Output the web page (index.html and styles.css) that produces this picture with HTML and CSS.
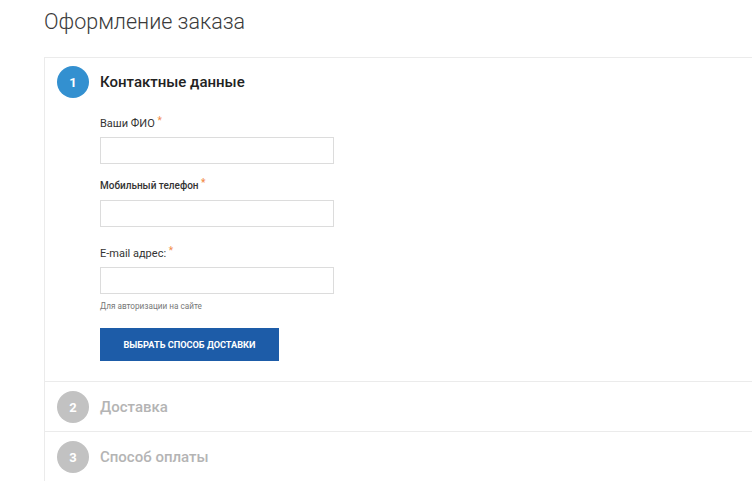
FILE: index.html
```html
<!DOCTYPE html>
<html lang="ru">
<head>
<meta charset="utf-8">
<title>Оформление заказа</title>
<link rel="stylesheet" href="styles.css">
</head>
<body>
<div class="page">
  <h1 class="title">Оформление заказа</h1>
  <div class="steps">
    <section class="step step-active">
      <div class="step-head">
        <span class="num">1</span>
        <h2 class="step-title">Контактные данные</h2>
      </div>
      <div class="step-body">
        <div class="field field-first">
          <label class="label">Ваши ФИО <span class="req">*</span></label>
          <input class="input" type="text">
        </div>
        <div class="field field-second">
          <label class="label label-bold">Мобильный телефон <span class="req">*</span></label>
          <input class="input" type="text">
        </div>
        <div class="field field-third">
          <label class="label">E-mail адрес: <span class="req">*</span></label>
          <input class="input" type="text">
          <div class="hint">Для авторизации на сайте</div>
        </div>
        <button class="btn" type="button">Выбрать способ доставки</button>
      </div>
    </section>
    <section class="step step-disabled">
      <div class="step-head">
        <span class="num">2</span>
        <h2 class="step-title">Доставка</h2>
      </div>
    </section>
    <section class="step step-disabled">
      <div class="step-head">
        <span class="num">3</span>
        <h2 class="step-title">Способ оплаты</h2>
      </div>
    </section>
  </div>
</div>
</body>
</html>
```
FILE: styles.css
```css
html, body {
  margin: 0;
  padding: 0;
  background: #fff;
}
body {
  font-family: Roboto, "Open Sans", "Liberation Sans", sans-serif;
  color: #333;
}
.page {
  padding: 0 0 0 44px;
}
.title {
  margin: 0;
  height: 57px;
  padding-top: 7px;
  box-sizing: border-box;
  font-size: 21.5px;
  line-height: 30px;
  font-weight: 300;
  color: #3a3a3a;
}
.steps {
  border-top: 1px solid #ebebeb;
  border-left: 1px solid #ebebeb;
}
.step + .step {
  border-top: 1px solid #ebebeb;
}
.step-head {
  display: flex;
  align-items: center;
  padding: 8px 12px;
  gap: 11px;
}
.step-disabled .step-head {
  padding: 9px 12px 8px;
}
.num {
  width: 32px;
  height: 32px;
  border-radius: 50%;
  display: flex;
  align-items: center;
  justify-content: center;
  font-size: 13px;
  font-weight: 700;
  color: #fff;
  flex: none;
}
.step-active .num {
  background: #3390d0;
}
.step-disabled .num {
  background: #c2c2c2;
}
.step-title {
  margin: 0;
  font-size: 15px;
  font-weight: 500;
  line-height: 20px;
}
.step-active .step-title {
  color: #222;
}
.step-disabled .step-title {
  color: #b4b4b4;
}
.step-body {
  padding: 10px 0 20px 55px;
}
.field {
  display: flex;
  flex-direction: column;
  align-items: flex-start;
}
.field-second {
  margin-top: 14px;
}
.field-third {
  margin-top: 19px;
}
.label {
  font-size: 11px;
  line-height: 16px;
  color: #333;
  margin-bottom: 5px;
}
.label-bold {
  font-size: 10px;
  font-weight: 500;
  margin-bottom: 6px;
}
.req {
  color: #f28a4a;
  font-size: 10px;
  vertical-align: top;
  position: relative;
  top: -3px;
}
.input {
  width: 234px;
  height: 27px;
  box-sizing: border-box;
  border: 1px solid #dcdcdc;
  background: #fff;
  margin: 0;
  padding: 0 8px;
}
.hint {
  margin-top: 6px;
  font-size: 8.2px;
  line-height: 12px;
  color: #777;
}
.btn {
  margin-top: 16px;
  width: 179px;
  height: 33px;
  border: none;
  background: #1d5ca8;
  color: #fff;
  font-family: Roboto, "Liberation Sans", sans-serif;
  font-size: 9.2px;
  font-weight: 700;
  text-transform: uppercase;
  padding: 0;
  display: block;
}
```
